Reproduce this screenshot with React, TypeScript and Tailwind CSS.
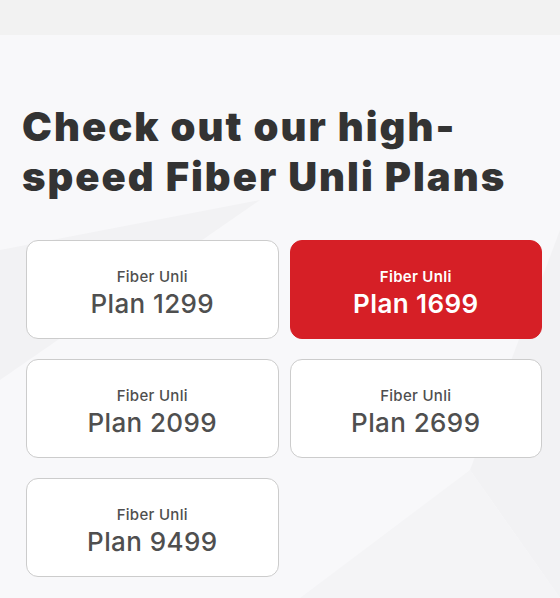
const plans = [
  { id: '1299', active: false },
  { id: '1699', active: true },
  { id: '2099', active: false },
  { id: '2699', active: false },
  { id: '9499', active: false },
];

export default function App() {
  return (
    <div
      className="relative h-[598px] w-[560px] overflow-hidden bg-[#f8f8fa]"
      style={{ fontFamily: 'Inter, "Open Sans", sans-serif' }}
    >
      {/* faint geometric backdrop */}
      <svg className="pointer-events-none absolute inset-0" width="560" height="598" viewBox="0 0 560 598">
        <polygon points="0,250 260,200 0,380" fill="#f2f2f4" />
        <polygon points="560,230 470,470 560,598" fill="#f2f2f4" />
        <polygon points="300,598 470,470 560,598" fill="#f4f4f6" />
      </svg>

      <div className="relative h-[35px] bg-[#f2f2f2]" />

      <div className="relative px-[22px] pt-[67px]">
        <h2 className="text-[40px] font-black leading-[50px] tracking-[2px] text-[#333333]">
          Check out our high-
          <br />
          speed Fiber Unli Plans
        </h2>
      </div>

      <div className="relative mt-[38px] grid grid-cols-2 gap-x-[11px] gap-y-[20px] pl-[26px] pr-[18px]">
        {plans.map((p) => (
          <PlanCard key={p.id} plan={p.id} active={p.active} />
        ))}
      </div>
    </div>
  );
}

function PlanCard({ plan, active }: { plan: string; active: boolean }) {
  return (
    <div
      className={
        active
          ? 'flex h-[99px] flex-col items-center justify-center rounded-[12px] border border-[#d61f26] bg-[#d61f26] pt-[8px] text-white'
          : 'flex h-[99px] flex-col items-center justify-center rounded-[12px] border border-[#cccccc] bg-white pt-[8px] text-[#4f4f4f]'
      }
    >
      <span className={active ? 'text-[15px] font-semibold leading-[18px] tracking-[0.3px]' : 'text-[15px] font-medium leading-[18px] tracking-[0.3px]'}>
        Fiber Unli
      </span>
      <span className={active ? 'mt-[3px] text-[26px] font-semibold leading-[30px] tracking-[0.4px]' : 'mt-[3px] text-[26px] font-medium leading-[30px] tracking-[0.4px]'}>
        Plan {plan}
      </span>
    </div>
  );
}
